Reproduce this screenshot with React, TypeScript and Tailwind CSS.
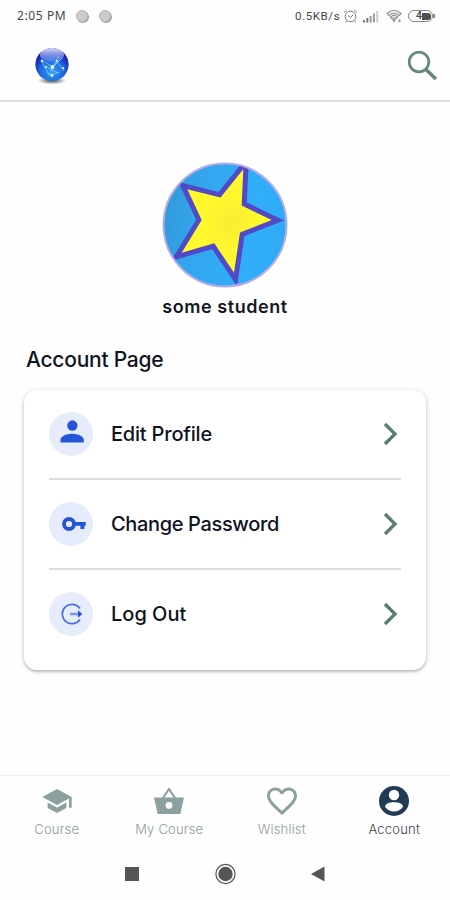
import { ReactNode } from "react"

function StatusBar() {
  return (
    <div className="flex h-8 items-center justify-between pl-[17px] pr-[15px] text-[#454545]">
      <div className="flex items-center">
        <span className="w-[50px] whitespace-nowrap font-['Noto_Sans',sans-serif] text-[12px] leading-4 tracking-[0.6px]">2:05 PM</span>
        <span className="ml-[9px] h-[12px] w-[12px] rounded-full border border-[#b5b5b5] bg-[#cbcbcb] shadow-[1px_1px_0_#a5a5a5]" />
        <span className="ml-[11px] h-[12px] w-[12px] rounded-full border border-[#b5b5b5] bg-[#cbcbcb] shadow-[1px_1px_0_#a5a5a5]" />
      </div>
      <div className="flex items-center">
        <span className="w-[46px] whitespace-nowrap font-['Roboto',sans-serif] text-[11.5px] leading-4 tracking-[0.6px]">0.5KB/s</span>
        <svg className="ml-[2px]" width="15" height="14" viewBox="0 0 15 14" fill="none" stroke="#777" strokeWidth="1">
          <circle cx="7.5" cy="7.5" r="5.3" />
          <path d="M1 3.5 3.8 1M14 3.5 11.2 1M5 6.5l2.5 2L10 6M3.5 12l-1 1.5M11.5 12l1 1.5" />
        </svg>
        <svg className="ml-[5px]" width="16" height="13" viewBox="0 0 16 13" fill="#999">
          <path d="M0 10h2v2.5H0zM3.3 8h2v4.5h-2z" fill="#777" />
          <path d="M6.6 6h2v6.5h-2zM9.9 3.5h2v9h-2z" />
          <path d="M13.2 1h2v11.5h-2z" fill="#ccc" />
        </svg>
        <svg className="ml-[7px]" width="17" height="14" viewBox="0 0 17 14" fill="none" stroke="#888" strokeWidth="1.1">
          <path d="M1 4.5Q8 -1.5 15 4.5L13.2 6.5Q8 2 2.8 6.5ZM4.3 8Q8 4.8 11.7 8L10.3 9.5Q8 8 5.7 9.5ZM7 10.5h2L8 12.5Z" />
          <path d="M13.5 10.5v2.5" strokeWidth="1.8" />
        </svg>
        <div className="ml-[5px] flex h-[12px] w-[25px] items-center justify-end rounded-[6px] border border-[#888] pr-[1px]">
          <span className="font-['Roboto',sans-serif] text-[10.5px] font-medium leading-none">4</span>
          <span className="h-[7px] w-[9px] rounded-r-[3px] bg-[#505050]" />
        </div>
        <span className="h-[4px] w-[2px] bg-[#888]" />
      </div>
    </div>
  )
}

function Globe() {
  return (
    <svg width="36" height="38" viewBox="0 0 36 38">
      <defs>
        <radialGradient id="globe" cx="0.5" cy="0.72" r="0.62">
          <stop offset="0" stopColor="#2d9cf0" />
          <stop offset="0.6" stopColor="#1e66dc" />
          <stop offset="1" stopColor="#1818ae" />
        </radialGradient>
        <linearGradient id="gloss" x1="0" y1="0" x2="0" y2="1">
          <stop offset="0" stopColor="#eef1ff" stopOpacity="0.9" />
          <stop offset="1" stopColor="#8ba7f4" stopOpacity="0.3" />
        </linearGradient>
        <radialGradient id="globeShadow">
          <stop offset="0" stopColor="#111" stopOpacity="0.8" />
          <stop offset="1" stopColor="#111" stopOpacity="0" />
        </radialGradient>
      </defs>
      <ellipse cx="18" cy="33.5" rx="14" ry="4" fill="url(#globeShadow)" />
      <circle cx="18" cy="17.5" r="16.6" fill="url(#globe)" />
      <ellipse cx="18" cy="8" rx="12" ry="7" fill="url(#gloss)" />
      <path d="M7 13l12 7 9-9M7 13l8 15 4-8 4-5 7 9M15 28l11-3M19 20l6-11M11 19l13 7" fill="none" stroke="#94dcff" strokeWidth="0.8" opacity="0.8" />
      <g fill="#e3f8ff">
        <circle cx="8" cy="14" r="1.2" />
        <circle cx="18.5" cy="20" r="1.9" />
        <circle cx="23" cy="14" r="1.1" />
        <circle cx="18" cy="28.5" r="1.4" />
        <circle cx="29" cy="21" r="1.1" />
        <circle cx="12" cy="20" r="1" />
      </g>
    </svg>
  )
}

function Header() {
  return (
    <header className="flex h-[70px] items-center justify-between border-b-2 border-[#dedede] pl-[34px] pr-[12px]">
      <Globe />
      <svg width="31" height="30" viewBox="0 0 31 30" fill="none" stroke="#648880">
        <circle cx="12" cy="11" r="9.8" strokeWidth="2.7" />
        <path d="M19 18.5l10 9.6" strokeWidth="3.5" />
      </svg>
    </header>
  )
}

const starPath =
  "M81.3 7.3L79.7 43.5 109.7 58 78 70.5 72 110.7 52.3 81.3 19.7 90.7 39.7 58 25.3 27.3 58.5 35.5Z"

function Avatar() {
  return (
    <svg width="126" height="126" viewBox="0 0 126 126">
      <defs>
        <linearGradient id="sky" x1="0" y1="0.3" x2="1" y2="0.5">
          <stop offset="0" stopColor="#3497d8" />
          <stop offset="0.3" stopColor="#32a7ee" />
          <stop offset="0.75" stopColor="#31adfa" />
          <stop offset="1" stopColor="#30aaf5" />
        </linearGradient>
        <radialGradient id="star" cx="0.55" cy="0.52" r="0.5">
          <stop offset="0" stopColor="#fbec33" />
          <stop offset="0.5" stopColor="#fff62e" />
          <stop offset="1" stopColor="#fffa2b" />
        </radialGradient>
        <clipPath id="round">
          <circle cx="63" cy="63" r="61.5" />
        </clipPath>
      </defs>
      <circle cx="63" cy="63" r="61.5" fill="url(#sky)" />
      <g clipPath="url(#round)">
        <path d={starPath} fill="none" stroke="#5149c5" strokeWidth="10" strokeMiterlimit="6" />
        <path d={starPath} fill="url(#star)" />
      </g>
      <circle cx="63" cy="63" r="61.5" fill="none" stroke="#b3ade6" strokeWidth="2" />
    </svg>
  )
}

const PersonIcon = () => (
  <svg width="24" height="24" viewBox="0 0 26 26" fill="#2454da">
    <circle cx="13.4" cy="6" r="5.6" />
    <path d="M0.5 24.5v-2.8C0.5 17 8 14.8 13.2 14.8S25.8 17 25.8 21.7v2.8Z" />
  </svg>
)

const KeyIcon = () => (
  <svg width="24" height="16" viewBox="0 0 24 16">
    <circle cx="7" cy="8" r="5" fill="none" stroke="#2454da" strokeWidth="3.8" />
    <path d="M11.5 6h12.2v3.7h-1.300v3.300h-4v-3.300h-6.900Z" fill="#2454da" />
  </svg>
)

const LogOutIcon = () => (
  <svg width="24" height="24" viewBox="0 0 24 24" fill="none" stroke="#4a70df" strokeWidth="1.7">
    <path d="M20 6.5A9.7 9.7 0 1 0 20 17.5" />
    <path d="M10 12h10" strokeWidth="2.6" stroke="#7c96e8" />
    <path d="M18 8.2l4.3 3.8L18 15.8Z" fill="#2454da" stroke="none" />
  </svg>
)

interface MenuRowProps {
  label: string
  icon: ReactNode
  iconClass: string
  textClass: string
  last?: boolean
}

function MenuRow({ label, icon, iconClass, textClass, last }: MenuRowProps) {
  return (
    <div className={`flex items-center pr-[3px] ${last ? "h-[88px]" : "h-[90px] border-b-2 border-[#dcdddd]"}`}>
      <span className={`flex h-[44px] w-[44px] items-center justify-center rounded-full bg-[#e7ecfd] ${iconClass}`}>{icon}</span>
      <span className={`ml-[18px] grow whitespace-nowrap font-['Inter',sans-serif] text-[20px] font-medium leading-7 text-[#10131f] ${textClass}`}>{label}</span>
      <svg width="15" height="24" viewBox="0 0 15 24" fill="none" stroke="#5b7c75" strokeWidth="3.3">
        <path d="M2 2l10 10L2 22" />
      </svg>
    </div>
  )
}

const tabs = [
  {
    label: "Course",
    textClass: "text-[#8d9c9a]",
    icon: (
      <svg width="32" height="32" viewBox="0 0 24 24" fill="#8ba09f">
        <path d="M5 13.18v4L12 21l7-3.82v-4L12 17l-7-3.82zM12 3L1 9l11 6 9-4.91V17h2V9L12 3z" />
      </svg>
    ),
  },
  {
    label: "My Course",
    textClass: "text-[#8d9c9a]",
    icon: (
      <svg width="32" height="32" viewBox="0 0 32 32">
        <path d="M10 13L16 4 22 13" fill="none" stroke="#8ba09f" strokeWidth="2.2" strokeLinejoin="round" />
        <path fillRule="evenodd" d="M1 12.5h30L27.3 29H4.700ZM16 17a3.400 3.400 0 1 0 0 6.800 3.400 3.400 0 0 0 0-6.800Z" fill="#8ba09f" />
      </svg>
    ),
  },
  {
    label: "Wishlist",
    textClass: "text-[#8d9c9a]",
    icon: (
      <svg width="36" height="36" viewBox="0 0 24 24" fill="#8ba09f">
        <path d="M16.5 3c-1.740 0-3.410.81-4.500 2.090C10.910 3.810 9.240 3 7.500 3 4.420 3 2 5.420 2 8.500c0 3.780 3.400 6.860 8.550 11.540L12 21.350l1.450-1.320C18.600 15.360 22 12.280 22 8.500 22 5.420 19.580 3 16.500 3zm-4.400 15.550l-.1.100-.1-.1C7.140 14.240 4 11.390 4 8.500 4 6.500 5.500 5 7.500 5c1.540 0 3.040.99 3.570 2.360h1.870C13.460 5.990 14.960 5 16.500 5c2 0 3.500 1.500 3.500 3.500 0 2.890-3.140 5.740-7.900 10.050z" />
      </svg>
    ),
  },
  {
    label: "Account",
    textClass: "text-[#3c4650]",
    icon: (
      <svg width="32" height="32" viewBox="0 0 32 32">
        <circle cx="16" cy="16" r="15" fill="#213b55" />
        <circle cx="16" cy="10" r="5.2" fill="#fff" />
        <path d="M7 21.8c0-3.200 4.500-4.600 9-4.600s9 1.400 9 4.600c-2 3-5.300 4.800-9 4.800s-7-1.800-9-4.800Z" fill="#fff" />
      </svg>
    ),
  },
]

function TabBar() {
  return (
    <nav className="grid h-[72px] grid-cols-4 border-t border-[#eeeeee]">
      {tabs.map((tab) => (
        <div key={tab.label} className="flex flex-col items-center pl-px pt-[8px]">
          <span className="flex h-[34px] items-center">{tab.icon}</span>
          <span className={`mt-[2px] whitespace-nowrap font-['Inter',sans-serif] text-[13px] font-light leading-[18px] tracking-[0.2px] ${tab.textClass}`}>{tab.label}</span>
        </div>
      ))}
    </nav>
  )
}

function SystemNav() {
  return (
    <div className="flex h-[53px] items-center justify-between px-[125px]">
      <span className="h-[14px] w-[14px] bg-[#555]" />
      <svg width="22" height="22" viewBox="0 0 22 22">
        <circle cx="11.5" cy="11" r="9.6" fill="none" stroke="#555" strokeWidth="1.2" />
        <circle cx="11.5" cy="11" r="7.2" fill="#555" />
      </svg>
      <svg width="14" height="16" viewBox="0 0 14 16" fill="#555">
        <path d="M0 8L13.5 .5v15Z" />
      </svg>
    </div>
  )
}

export default function App() {
  return (
    <div className="flex h-[900px] w-[450px] flex-col overflow-hidden bg-[#fefefe]">
      <StatusBar />
      <Header />
      <main className="flex grow flex-col">
        <div className="flex flex-col items-center pt-[60px]">
          <Avatar />
          <p className="mt-[7px] whitespace-nowrap font-['Inter',sans-serif] text-[18px] font-semibold leading-6 tracking-[0.55px] text-[#15171f]">some student</p>
        </div>
        <h1 className="ml-[26px] mt-[27px] whitespace-nowrap font-['Inter',sans-serif] text-[21px] font-medium leading-7 tracking-[-0.25px] text-[#10131f]">Account Page</h1>
        <section className="mx-6 mt-[16px] h-[280px] rounded-[13px] bg-white px-[25px] shadow-[0_1px_5px_rgba(0,0,0,0.20),0_2px_2px_rgba(0,0,0,0.14)]">
          <MenuRow label="Edit Profile" icon={<PersonIcon />} iconClass="pl-px pb-[5px]" textClass="tracking-[-0.2px]" />
          <MenuRow label="Change Password" icon={<KeyIcon />} iconClass="pl-[5px]" textClass="tracking-[-0.35px]" />
          <MenuRow label="Log Out" icon={<LogOutIcon />} iconClass="pl-[2px]" textClass="tracking-[0px]" last />
        </section>
      </main>
      <TabBar />
      <SystemNav />
    </div>
  )
}
